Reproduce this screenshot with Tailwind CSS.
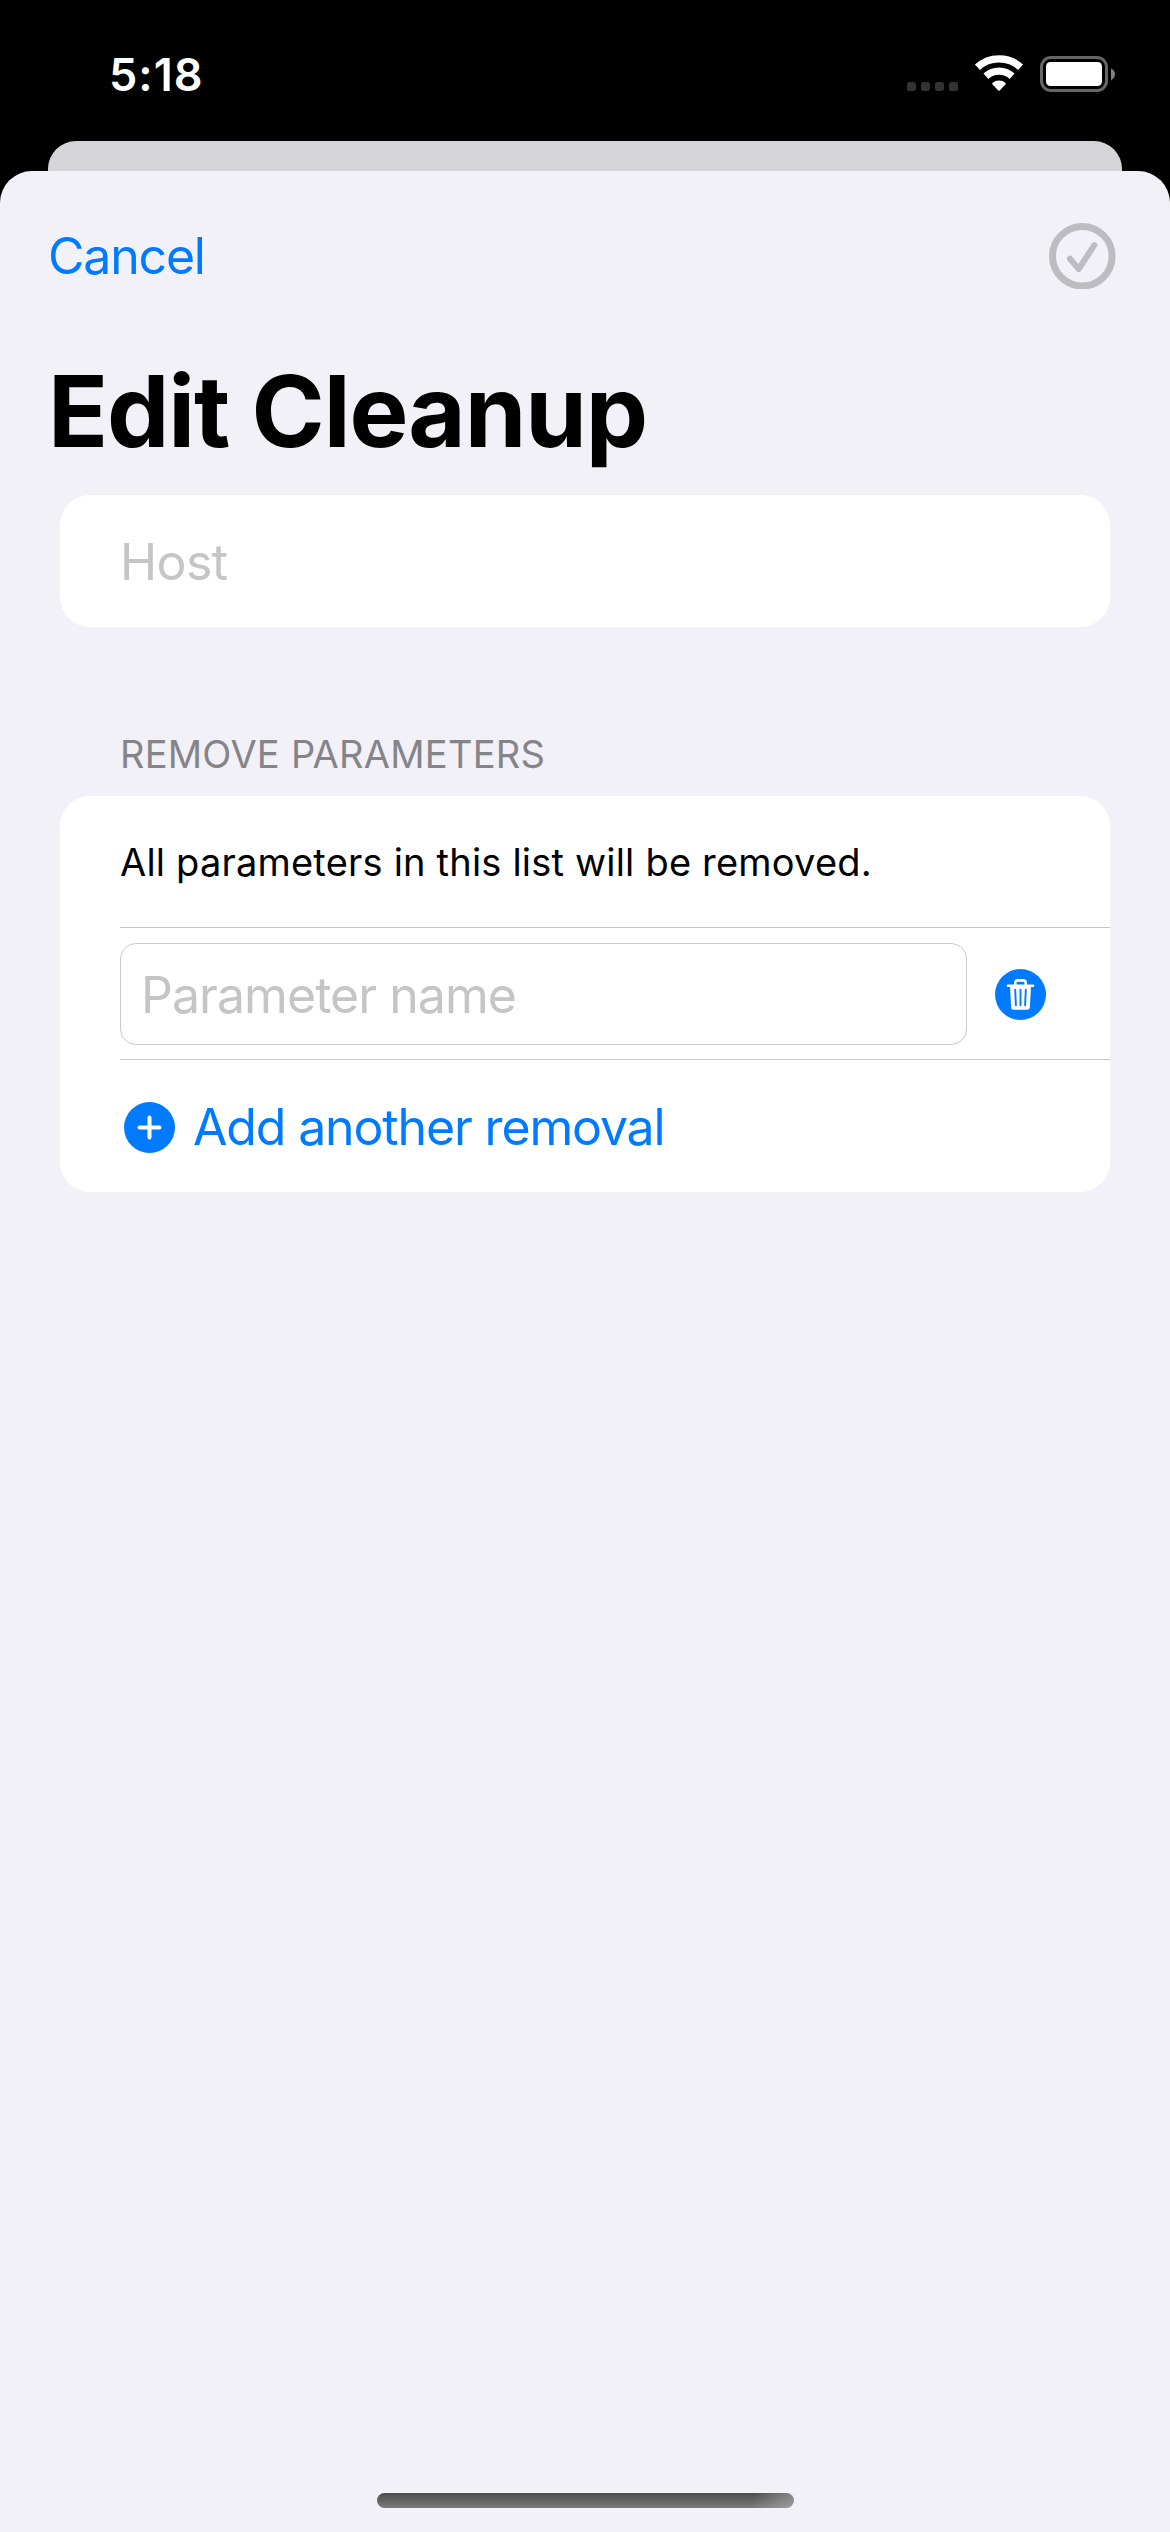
<!DOCTYPE html>
<html lang="en">
<head>
<meta charset="utf-8">
<title>Edit Cleanup</title>
<script src="https://cdn.jsdelivr.net/npm/@tailwindcss/browser@4"></script>
</head>
<body class="flex h-[2532px] w-[1170px] flex-col overflow-hidden bg-black font-[Inter,sans-serif]">
  <header class="flex h-[141px] shrink-0 items-start justify-between pr-[54px] pl-[109px]">
    <div class="pt-[45px] text-[45px] leading-[60px] font-semibold tracking-[1px] text-white">5:18</div>
    <svg class="mt-[52px]" width="209" height="42" viewBox="0 0 209 42" fill="none">
      <g fill="#333333"><rect x="0" y="30" width="9" height="9" rx="2.8"/><rect x="14" y="30" width="9" height="9" rx="2.8"/><rect x="28" y="30" width="9" height="9" rx="2.8"/><rect x="42" y="30" width="9" height="9" rx="2.8"/></g>
      <g transform="translate(92 38.700)">
        <path d="M-21.600 -23.400A31.800 31.800 0 0 1 21.600 -23.400" stroke="#fff" stroke-width="7.400"/>
        <path d="M-13.100 -14.400A19.400 19.400 0 0 1 13.100 -14.400" stroke="#fff" stroke-width="7.300"/>
        <path d="M-6.600 -7.600A10 10 0 0 1 6.600 -7.600Q7.200 -7 6.600 -6.400L.7 -.3Q0 .3 -.7 -.3L-6.600 -6.400Q-7.200 -7 -6.600 -7.600Z" fill="#fff"/>
      </g>
      <rect x="134.500" y="5.500" width="65" height="33" rx="9.500" stroke="#666" stroke-width="3"/>
      <rect x="139" y="10" width="56" height="24" rx="4.500" fill="#fff"/>
      <path d="M204 16.500Q208 18.500 208 22.200Q208 26 204 28Z" fill="#808080"/>
    </svg>
  </header>
  <div class="mx-12 h-[30px] shrink-0 rounded-t-[28px] bg-[#d5d4d9]"></div>
  <main class="flex flex-1 flex-col rounded-t-[32px] bg-[#f2f1f7]">
    <nav class="flex h-[168px] shrink-0 items-center justify-between pr-[54px] pl-[48px]">
      <a class="pt-[2px] text-[50px] leading-[60px] tracking-[-1.2px] text-[#007aff]">Cancel</a>
      <svg width="67" height="67" viewBox="0 0 67 67" fill="none" stroke="#bdbcc1">
        <circle cx="33.300" cy="34.200" r="29.800" stroke-width="7"/>
        <path d="M21 36.800L29.700 47L45.300 23.200" stroke-width="6" stroke-linecap="round" stroke-linejoin="round"/>
      </svg>
    </nav>
    <h1 class="mt-[12px] pl-[48px] text-[99px] leading-[120px] font-bold tracking-[-1.1px]">Edit Cleanup</h1>
    <section class="mx-[60px] mt-[24px] flex h-[132px] shrink-0 items-center rounded-[30px] bg-white pt-[2px] pl-[60px]">
      <span class="text-[50px] leading-[60px] tracking-[-0.6px] text-[#c5c5c7]">Host</span>
    </section>
    <h2 class="mt-[103px] pl-[120px] text-[38px] leading-[48px] tracking-[0.25px] text-[#858489]">REMOVE PARAMETERS</h2>
    <section class="mx-[60px] mt-[18px] flex h-[396px] shrink-0 flex-col rounded-[30px] bg-white pl-[60px]">
      <div class="flex h-[132px] items-center border-b border-[#c6c6c8] pt-px">
        <span class="text-[38px] leading-[48px] tracking-[0.2px] text-black">All parameters in this list will be removed.</span>
      </div>
      <div class="flex h-[132px] items-center border-b border-[#c6c6c8] pt-px">
        <div class="flex h-[102px] w-[847px] items-center rounded-[16px] border border-[#cbcbcd] pt-px pl-[20px]">
          <span class="text-[50px] leading-[60px] tracking-[-0.95px] text-[#c5c5c7]">Parameter name</span>
        </div>
        <svg class="ml-[28px]" width="51" height="51" viewBox="0 0 51 51" fill="none">
          <circle cx="25.500" cy="25.500" r="25.500" fill="#007aff"/>
          <path d="M13 16.800H38" stroke="#fff" stroke-width="2.600" stroke-linecap="round"/>
          <path d="M20.300 16V14Q20.300 11.400 22.900 11.400H28.100Q30.700 11.400 30.700 14V16" stroke="#fff" stroke-width="2.600"/>
          <path d="M15 17H36L34.900 38.200Q34.700 40.800 32.200 40.800H18.800Q16.300 40.800 16.100 38.200Z" fill="#fff"/>
          <path d="M20.200 20.800L20.900 36.200M25.500 20.800V36.200M30.800 20.800L30.100 36.200" stroke="#007aff" stroke-width="1.900" stroke-linecap="round"/>
        </svg>
      </div>
      <div class="flex h-[132px] items-center pt-[2px] pl-[4px] text-[#007aff]">
        <svg width="51" height="51" viewBox="0 0 51 51" fill="none">
          <circle cx="25.500" cy="25.500" r="25.500" fill="#007aff"/>
          <path d="M15.500 25.500H35.500M25.500 15.500V35.500" stroke="#fff" stroke-width="4" stroke-linecap="round"/>
        </svg>
        <span class="ml-[18px] text-[50px] leading-[60px] tracking-[-1.15px]">Add another removal</span>
      </div>
    </section>
    <div class="mx-auto mt-auto mb-[24px] h-[15px] w-[417px] rounded-full bg-[linear-gradient(to_right,transparent_90%,rgba(200,200,200,0.45)),linear-gradient(to_bottom,#4b4b4d,#7d7d7e)]"></div>
  </main>
</body>
</html>
